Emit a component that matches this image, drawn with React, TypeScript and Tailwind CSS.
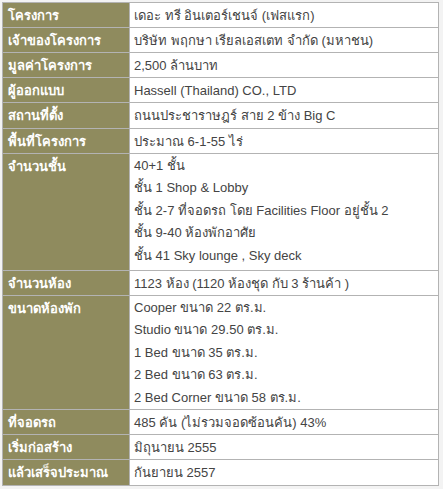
const rows: { label: string; lines: string[]; h: string }[] = [
  { label: "โครงการ", lines: ["เดอะ ทรี อินเตอร์เชนจ์ (เฟสแรก)"], h: "h-[25px]" },
  { label: "เจ้าของโครงการ", lines: ["บริษัท พฤกษา เรียลเอสเตท จำกัด (มหาชน)"], h: "h-[25px]" },
  { label: "มูลค่าโครงการ", lines: ["2,500 ล้านบาท"], h: "h-[25px]" },
  { label: "ผู้ออกแบบ", lines: ["Hassell (Thailand) CO., LTD"], h: "h-[25px]" },
  { label: "สถานที่ตั้ง", lines: ["ถนนประชาราษฎร์ สาย 2 ข้าง Big C"], h: "h-[26px]" },
  { label: "พื้นที่โครงการ", lines: ["ประมาณ 6-1-55 ไร่"], h: "h-[25px]" },
  {
    label: "จำนวนชั้น",
    lines: [
      "40+1 ชั้น",
      "ชั้น 1 Shop & Lobby",
      "ชั้น 2-7 ที่จอดรถ โดย Facilities Floor อยู่ชั้น 2",
      "ชั้น 9-40 ห้องพักอาศัย",
      "ชั้น 41 Sky lounge , Sky deck",
    ],
    h: "h-[117px]",
  },
  { label: "จำนวนห้อง", lines: ["1123 ห้อง (1120 ห้องชุด กับ 3 ร้านค้า )"], h: "h-[25px]" },
  {
    label: "ขนาดห้องพัก",
    lines: [
      "Cooper ขนาด 22 ตร.ม.",
      "Studio ขนาด 29.50 ตร.ม.",
      "1 Bed ขนาด 35 ตร.ม.",
      "2 Bed ขนาด 63 ตร.ม.",
      "2 Bed Corner ขนาด 58 ตร.ม.",
    ],
    h: "h-[113px]",
  },
  { label: "ที่จอดรถ", lines: ["485 คัน (ไม่รวมจอดซ้อนคัน) 43%"], h: "h-[25px]" },
  { label: "เริ่มก่อสร้าง", lines: ["มิถุนายน 2555"], h: "h-[25px]" },
  { label: "แล้วเสร็จประมาณ", lines: ["กันยายน 2557"], h: "h-[26px]" },
];

export default function App() {
  return (
    <div
      className="w-[443px] h-[489px] bg-[#f3f3f3] pt-[2px] pl-[2px]"
      style={{ fontFamily: '"Liberation Sans", "Noto Sans", sans-serif' }}
    >
      <table className="border-collapse w-[437px] text-[13px]">
        <tbody>
          {rows.map((r) => (
            <tr key={r.label} className={r.h}>
              <td className="w-[127px] align-top border border-[#b3b3b3] bg-[#8f8b5e] text-white font-bold pl-[5px] pt-[3px] leading-[19px]">
                {r.label}
              </td>
              <td
                className={
                  "border border-[#b3b3b3] bg-white text-[#444] pl-[4px] " +
                  (r.lines.length > 1 ? "align-top pt-[1px]" : "align-middle")
                }
              >
                {r.lines.map((l) => (
                  <div
                    key={l}
                    className={r.lines.length > 1 ? "leading-[22.4px]" : "leading-[19px]"}
                  >
                    {l}
                  </div>
                ))}
              </td>
            </tr>
          ))}
        </tbody>
      </table>
    </div>
  );
}
